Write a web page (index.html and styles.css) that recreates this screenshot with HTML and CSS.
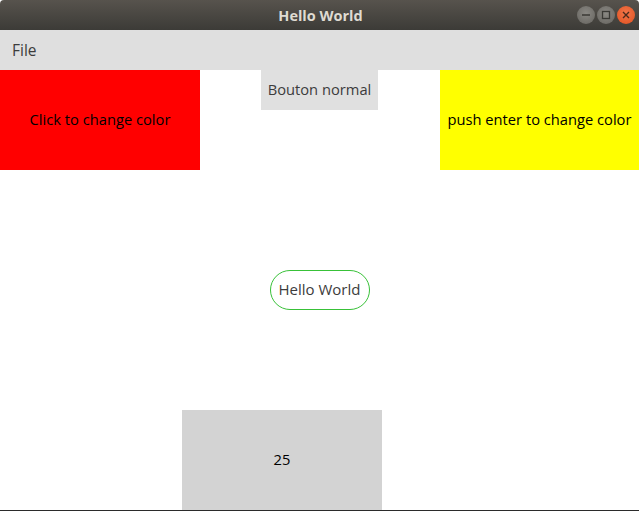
FILE: index.html
```html
<!DOCTYPE html>
<html>
<head>
<meta charset="utf-8">
<link rel="stylesheet" href="styles.css">
</head>
<body>
<div class="window">
  <div class="titlebar">
    <span class="title">Hello World</span>
    <div class="controls">
      <span class="wbtn"><svg width="18" height="18" viewBox="0 0 18 18"><line x1="5" y1="9" x2="13" y2="9" stroke="#3a3935" stroke-width="1.5"/></svg></span>
      <span class="wbtn"><svg width="18" height="18" viewBox="0 0 18 18"><rect x="5.5" y="5.5" width="7" height="7" fill="none" stroke="#3a3935" stroke-width="1.3"/></svg></span>
      <span class="wbtn close"><svg width="18" height="18" viewBox="0 0 18 18"><path d="M6 6 L12 12 M12 6 L6 12" stroke="#4a2a1c" stroke-width="1.4"/></svg></span>
    </div>
  </div>
  <div class="menubar"><span class="menu-item">File</span></div>
  <div class="content">
    <div class="toprow">
      <div class="red-box">Click to change color</div>
      <div></div>
      <div class="normal-btn">Bouton normal</div>
      <div></div>
      <div class="yellow-box">push enter to change color</div>
    </div>
    <div class="middle">
      <div class="pill">Hello World</div>
    </div>
    <div class="bottom">
      <div class="gray-box">25</div>
    </div>
  </div>
  <div class="bottom-line"></div>
</div>
</body>
</html>
```
FILE: styles.css
```css
html, body {
  margin: 0;
  padding: 0;
  background: #ffffff;
}
.window {
  width: 639px;
  height: 511px;
  display: flex;
  flex-direction: column;
  font-family: "Open Sans", "DejaVu Sans", sans-serif;
  font-size: 14.7px;
  overflow: hidden;
}
.titlebar {
  height: 30px;
  flex: none;
  background: linear-gradient(#57534d, #3c3b37);
  border-radius: 4px 4px 0 0;
  display: flex;
  align-items: center;
  justify-content: center;
  position: relative;
}
.title {
  color: #dfdbd2;
  font-weight: bold;
  font-size: 14.5px;
  font-family: "Open Sans", sans-serif;
  margin-left: 2px;
}
.controls {
  position: absolute;
  right: 4px;
  top: 6px;
  display: flex;
  gap: 2px;
}
.wbtn {
  width: 18px;
  height: 18px;
  border-radius: 50%;
  background: radial-gradient(circle at 50% 40%, #8a8883, #65635e);
  border: 0;
  display: block;
}
.wbtn svg { display: block; }
.wbtn.close {
  background: radial-gradient(circle at 50% 40%, #f2764a, #e0501f);
}
.menubar {
  height: 40px;
  flex: none;
  background: #dfdfdf;
  display: flex;
  align-items: center;
  padding-left: 12px;
}
.menu-item {
  color: #3c3c3c;
  font-size: 15.5px;
}
.content {
  height: 440px;
  flex: none;
  display: flex;
  flex-direction: column;
}
.toprow {
  display: grid;
  grid-template-columns: 200px 61px 117px 62px 199px;
  height: 100px;
  align-items: start;
}
.red-box, .yellow-box {
  height: 100px;
  padding-bottom: 2px;
  box-sizing: border-box;
  display: flex;
  align-items: center;
  justify-content: center;
  color: #000;
  white-space: nowrap;
}
.red-box { background: #ff0000; }
.yellow-box { background: #ffff00; }
.normal-btn {
  height: 40px;
  padding-bottom: 2px;
  box-sizing: border-box;
  background: #e0e0e0;
  color: #3c3c3c;
  display: flex;
  align-items: center;
  justify-content: center;
  white-space: nowrap;
}
.middle {
  height: 240px;
  display: flex;
  align-items: center;
  justify-content: center;
}
.pill {
  width: 100px;
  height: 40px;
  padding-bottom: 2px;
  box-sizing: border-box;
  border: 1px solid #38c138;
  border-radius: 20px;
  color: #3c3c3c;
  display: flex;
  align-items: center;
  justify-content: center;
  white-space: nowrap;
  font-size: 15px;
}
.bottom {
  height: 100px;
  padding-left: 182px;
}
.gray-box {
  width: 200px;
  height: 100px;
  padding-bottom: 2px;
  box-sizing: border-box;
  background: #d3d3d3;
  color: #000;
  display: flex;
  align-items: center;
  justify-content: center;
}
.bottom-line {
  height: 1px;
  flex: none;
  background: #2b2b2b;
}
```
